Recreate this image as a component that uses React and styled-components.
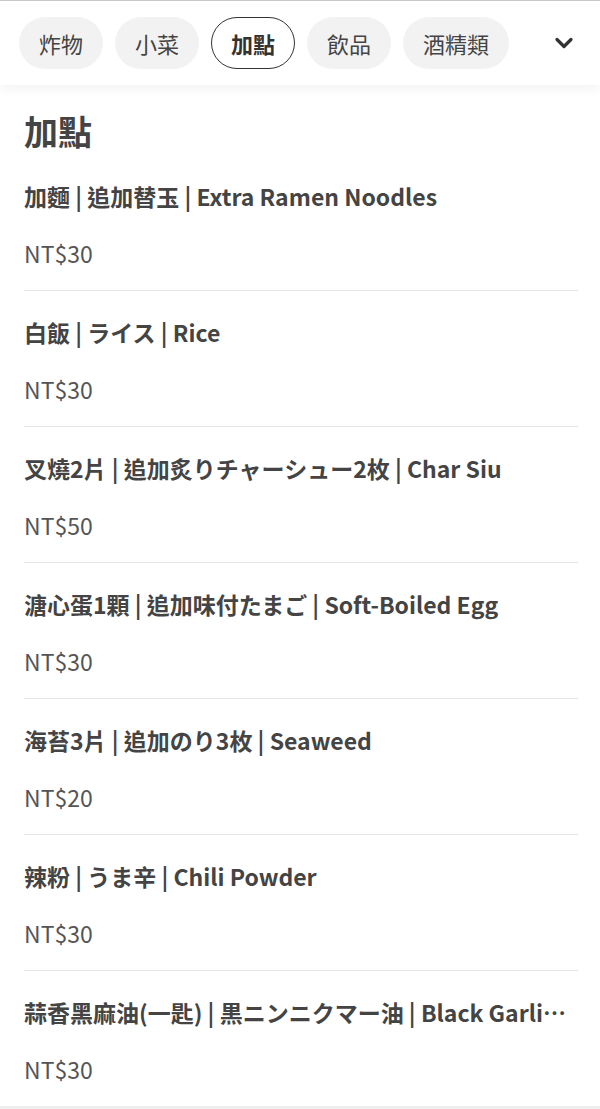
import styled, { createGlobalStyle } from "styled-components";

const GlobalStyle = createGlobalStyle`
  html, body {
    margin: 0;
    padding: 0;
    background: #fff;
  }
  body {
    font-family: "Noto Sans CJK TC", "Noto Sans", sans-serif;
    color: #444;
  }
`;

const Page = styled.div`
  display: flex;
  flex-direction: column;
  width: 600px;
  min-height: 1109px;
  background: #fff;
`;

const Header = styled.header`
  display: flex;
  align-items: center;
  height: 84px;
  border-top: 1px solid #c8c8c8;
  background: #fff;
  box-shadow: 0 3px 12px rgba(0, 0, 0, 0.06);
  position: relative;
  z-index: 1;
`;

const Tabs = styled.nav`
  display: flex;
  flex: 1;
  gap: 12px;
  padding-left: 19px;
  overflow: hidden;
`;

const Tab = styled.button`
  flex-shrink: 0;
  height: 52px;
  padding: 0 19px;
  border-radius: 26px;
  box-sizing: border-box;
  border: ${(p) => (p.$active ? "1.5px solid #333" : "1.5px solid transparent")};
  background: ${(p) => (p.$active ? "#fff" : "#f2f2f2")};
  font-family: inherit;
  font-size: 22px;
  font-weight: ${(p) => (p.$active ? 700 : 400)};
  color: ${(p) => (p.$active ? "#333" : "#444")};
  line-height: 1;
`;

const More = styled.button`
  width: 72px;
  height: 52px;
  display: flex;
  align-items: center;
  justify-content: center;
  border: none;
  background: transparent;
  padding: 0;
  margin-left: 8px;
`;

const Content = styled.main`
  display: flex;
  flex-direction: column;
  padding: 24px 24px 0;
  flex: 1;
`;

const Heading = styled.h2`
  margin: 0 0 27px;
  font-size: 34px;
  line-height: 44px;
  font-weight: 700;
  color: #444;
`;

const Item = styled.div`
  display: flex;
  flex-direction: column;
  gap: 25px;
  padding: ${(p) => (p.$first ? "0 0 21px" : "25px 0 21px")};
  border-bottom: ${(p) => (p.$last ? "none" : "1px solid #e4e4e4")};
  width: 554px;
`;

const ItemName = styled.div`
  font-size: 23px;
  line-height: 32px;
  font-weight: 700;
  color: #444;
  white-space: nowrap;
  overflow: hidden;
  text-overflow: ellipsis;
`;

const Price = styled.div`
  font-size: 23px;
  line-height: 32px;
  font-weight: 400;
  color: #555;
`;

const Footer = styled.div`
  height: 8px;
  background: #eeeeee;
`;

const tabs = ["炸物", "小菜", "加點", "飲品", "酒精類"];

const items = [
  { name: "加麵 | 追加替玉 | Extra Ramen Noodles", price: 30 },
  { name: "白飯 | ライス | Rice", price: 30 },
  { name: "叉燒2片 | 追加炙りチャーシュー2枚 | Char Siu", price: 50 },
  { name: "溏心蛋1顆 | 追加味付たまご | Soft-Boiled Egg", price: 30 },
  { name: "海苔3片 | 追加のり3枚 | Seaweed", price: 20 },
  { name: "辣粉 | うま辛 | Chili Powder", price: 30 },
  { name: "蒜香黑麻油(一匙) | 黒ニンニクマー油 | Black Garlic Oil", price: 30 },
];

function Chevron() {
  return (
    <svg width="20" height="14" viewBox="0 0 20 14">
      <path d="M3 3.5 L10 10.5 L17 3.5" fill="none" stroke="#333" strokeWidth="3.2" strokeLinecap="round" strokeLinejoin="round" />
    </svg>
  );
}

export default function App() {
  return (
    <Page>
      <GlobalStyle />
      <Header>
        <Tabs>
          {tabs.map((t) => (
            <Tab key={t} $active={t === "加點"}>{t}</Tab>
          ))}
        </Tabs>
        <More aria-label="more"><Chevron /></More>
      </Header>
      <Content>
        <Heading>加點</Heading>
        {items.map((it, i) => (
          <Item key={it.name} $first={i === 0} $last={i === items.length - 1}>
            <ItemName title={it.name}>{it.name}</ItemName>
            <Price>NT${it.price}</Price>
          </Item>
        ))}
      </Content>
      <Footer />
    </Page>
  );
}
